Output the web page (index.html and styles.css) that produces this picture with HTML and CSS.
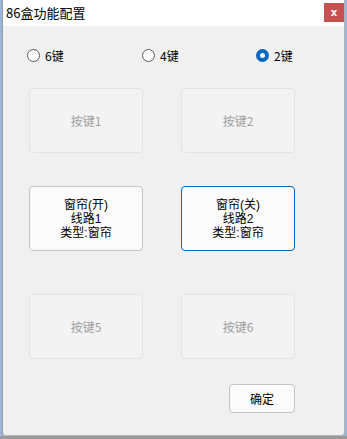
FILE: index.html
```html
<!DOCTYPE html>
<html lang="zh-CN">
<head>
    <meta charset="UTF-8">
    <meta name="viewport" content="width=device-width, initial-scale=1.0">
    <title>86盒功能配置</title>
    <link rel="stylesheet" href="styles.css">
</head>
<body>
    <div class="dialog">
        <!-- Title bar -->
        <div class="titlebar">
            <span class="title">86盒功能配置</span>
            <button class="close-btn">x</button>
        </div>

        <div class="content">
            <!-- Key count options -->
            <div class="radio-row">
                <label class="radio"><span class="dot"></span>6键</label>
                <label class="radio"><span class="dot"></span>4键</label>
                <label class="radio"><span class="dot checked"></span>2键</label>
            </div>

            <!-- Key buttons -->
            <div class="key-grid">
                <button class="key disabled">按键1</button>
                <button class="key disabled">按键2</button>
                <button class="key row2">
                    <span class="line">窗帘(开)</span>
                    <span class="line">线路1</span>
                    <span class="line">类型:窗帘</span>
                </button>
                <button class="key row2 selected">
                    <span class="line">窗帘(关)</span>
                    <span class="line">线路2</span>
                    <span class="line">类型:窗帘</span>
                </button>
                <button class="key disabled row3">按键5</button>
                <button class="key disabled row3">按键6</button>
            </div>

            <div class="footer">
                <button class="ok-btn">确定</button>
            </div>
        </div>
    </div>
</body>
</html>
```

FILE: styles.css
```css
body { margin: 0; width: 347px; height: 439px; font-family: "Noto Sans CJK SC", "Noto Sans", sans-serif; overflow: hidden; }
body { background: linear-gradient(to bottom, #9ab6da 0, #9ab6da 436px, #9a9a9a 436px); }
.dialog { margin-left: 2px; width: 341px; height: 435px; background: #f0f0f0; border-left: 1px solid #9c9c9c; border-right: 1px solid #b0b0b0; border-bottom: 1px solid #b8b8b8; border-radius: 0 0 4px 4px; }
.titlebar { height: 26px; background: #fff; display: flex; align-items: flex-start; justify-content: space-between; }
.title { font-size: 13px; line-height: 26px; padding-left: 3px; color: #000; }
.close-btn { margin-top: 3px; width: 20px; height: 19px; border: none; padding: 0; background: #c75050; color: #fff; font-size: 10px; font-weight: bold; font-family: "DejaVu Sans", sans-serif; line-height: 19px; }
.content { padding: 23px 0 0 24px; }
.radio-row { display: grid; grid-template-columns: 115px 114px 80px; height: 13px; }
.radio { display: flex; align-items: center; font-size: 12px; color: #000; line-height: 13px; }
.dot { width: 11px; height: 11px; border: 1px solid #5a5a5a; border-radius: 50%; background: #fff; margin-right: 5px; box-sizing: content-box; }
.dot.checked { width: 5px; height: 5px; border: 4px solid #0067c0; background: #fff; }
.key-grid { display: grid; grid-template-columns: 114px 114px; column-gap: 38px; margin: 26px 0 0 2px; }
.key { height: 65px; border: 1px solid #c4c4c4; border-radius: 4px; background: #fbfbfb; font-family: inherit; font-size: 12px; color: #000; padding: 0; }
.key .line { display: block; line-height: 14px; font-family: "Liberation Sans", "Noto Sans CJK SC", sans-serif; }
.key.disabled { background: #f3f3f3; border-color: #e3e3e3; color: #a0a0a0; }
.key.selected { border-color: #0067c0; }
.key.row2 { margin-top: 33px; }
.key.row3 { margin-top: 43px; }
.footer { display: flex; justify-content: flex-end; width: 268px; margin-top: 25px; }
.ok-btn { width: 66px; height: 29px; border: 1px solid #c4c4c4; border-radius: 4px; background: #fbfbfb; font-family: inherit; font-size: 12px; color: #000; padding: 0; }
```
